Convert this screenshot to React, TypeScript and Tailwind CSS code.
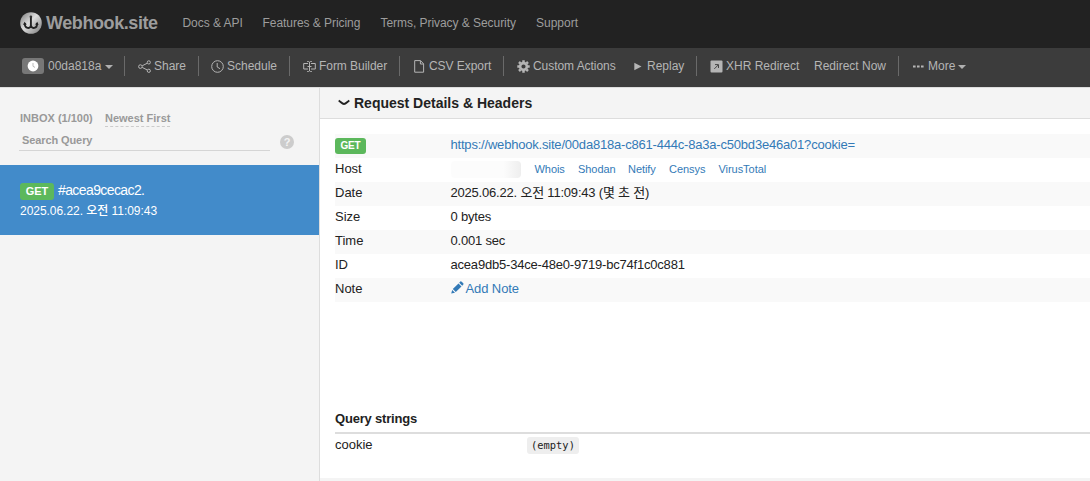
import type { ReactNode } from 'react';

function Anchor() {
  return (
    <svg className="size-[22px]" viewBox="0 0 22 22">
      <defs>
        <linearGradient id="metal" x1="0" y1="0" x2="1" y2="1">
          <stop offset="0" stopColor="#777" />
          <stop offset=".45" stopColor="#ddd" />
          <stop offset="1" stopColor="#777" />
        </linearGradient>
      </defs>
      <circle cx="11" cy="11" r="10.8" fill="url(#metal)" />
      <path d="M10.9 5V16M10.9 13.5C10.5 17.2 4.6 17 4.7 11.2M10.9 13.5C11.5 17.2 17.4 17 17.1 11.2" stroke="#222" strokeWidth="1.9" fill="none" />
      <path d="M4.5 9.8L3.2 13L6.8 12.4ZM17.3 9.8L18.6 13L15 12.4Z" fill="#222" />
      <circle cx="10.9" cy="4.8" r="1.3" fill="#333" />
    </svg>
  );
}

function Caret() {
  return <span className="ml-[4px] mt-[2px] border-x-4 border-t-4 border-x-transparent border-t-[#b0b0b0]" />;
}

function Item({ className, children }: { className: string; children: ReactNode }) {
  return <div className={`flex h-full shrink-0 items-center whitespace-nowrap ${className}`}>{children}</div>;
}

function Divider() {
  return <div className="mt-[8px] h-[20px] w-px shrink-0 self-start bg-[#6a6a6a]" />;
}

function Row({ label, striped, children }: { label: ReactNode; striped?: boolean; children: ReactNode }) {
  return (
    <div className={`flex h-[24px] leading-[21px] ${striped ? 'bg-[#f9f9f9]' : ''}`}>
      <div className="w-[115.5px] shrink-0">{label}</div>
      <div className="flex tracking-[-0.2px]">{children}</div>
    </div>
  );
}

export default function App() {
  return (
    <div className="flex h-[481px] w-[1090px] flex-col overflow-hidden bg-white font-['Liberation_Sans','Noto_Sans_CJK_KR',sans-serif] text-[13px] text-[#222]">
      <header className="flex h-[48px] shrink-0 items-center bg-[#222] pb-[3px] pl-[20px] text-[12px] text-[#9d9d9d]">
        <div className="flex w-[162.5px] items-center">
          <Anchor />
          <span className="ml-[4px] text-[18px] font-bold leading-[24px] tracking-[-0.42px]">Webhook.site</span>
        </div>
        <a className="w-[80px] tracking-[-0.05px]">Docs &amp; API</a>
        <a className="w-[118px] tracking-[-0.05px]">Features &amp; Pricing</a>
        <a className="w-[155.5px] tracking-[-0.05px]">Terms, Privacy &amp; Security</a>
        <a>Support</a>
      </header>

      <nav className="flex h-[39px] shrink-0 bg-[#3c3c3c] pl-[22px] text-[12px] text-[#b5b5b5] *:pb-[3px]">
        <Item className="w-[102px]">
          <span className="mr-[4px] flex h-[16px] w-[22px] items-center justify-center rounded-[3px] bg-[#777]">
            <svg className="size-[12px]" viewBox="0 0 12 12"><circle cx="6" cy="6" r="5.4" fill="#fff" /><path d="M6 3V6.3L8 7.4" stroke="#bbb" fill="none" /></svg>
          </span>
          <span>00da818a</span><Caret />
        </Item>
        <Divider />
        <Item className="w-[73px] pl-[13px]">
          <svg className="mr-[3px] size-[13px]" viewBox="0 0 13 13" fill="none" stroke="currentColor"><circle cx="2.4" cy="6.6" r="1.8" /><circle cx="10.8" cy="2.4" r="1.6" /><circle cx="10.8" cy="10.8" r="1.6" /><path d="M4.2 5.8L9.3 3.2M4.2 7.4L9.3 10" /></svg>
          <span>Share</span>
        </Item>
        <Divider />
        <Item className="w-[90px] pl-[12px]">
          <svg className="mr-[3px] size-[13px]" viewBox="0 0 13 13" fill="none" stroke="currentColor"><circle cx="6.5" cy="6.5" r="5.8" /><path d="M6.2 3V7L9 8.7" /></svg>
          <span>Schedule</span>
        </Item>
        <Divider />
        <Item className="w-[109px] pl-[13px]">
          <svg className="mr-[3px] size-[13px]" viewBox="0 0 13 13" fill="none" stroke="currentColor"><path d="M5 3.5H.7V9H5M8 3.5H12.3V9H8M4.2 1.5H5.5L6.5 2.2L7.5 1.5H8.8M6.5 2V11M4.2 11.5H5.5L6.5 10.8L7.5 11.5H8.8M4.5 6.5H8.5" /></svg>
          <span className="tracking-[-0.05px]">Form Builder</span>
        </Item>
        <Divider />
        <Item className="w-[103px] pl-[14px]">
          <svg className="mr-[4px] h-[13px] w-[11px]" viewBox="0 0 11 13" fill="none" stroke="currentColor"><path d="M.7 .6H6.5L9.6 3.8V12.2H.7ZM6.4 .8V4H9.5" /></svg>
          <span className="tracking-[-0.05px]">CSV Export</span>
        </Item>
        <Divider />
        <Item className="w-[130px] pl-[13px]">
          <svg className="mr-[3px] size-[13px]" viewBox="0 0 13 13" fill="none" stroke="currentColor"><circle cx="6.5" cy="6.5" r="3.4" strokeWidth="2.6" /><path d="M6.5 2V.3M6.5 11V12.7M2 6.5H.3M11 6.5H12.7M3.4 3.4L2 2M9.6 3.4L11 2M3.4 9.6L2 11M9.6 9.6L11 11" strokeWidth="2.5" /></svg>
          <span className="tracking-[-0.05px]">Custom Actions</span>
        </Item>
        <Item className="w-[62px] pl-[0px]">
          <svg className="mr-[4px] h-[9px] w-[9px]" viewBox="0 0 9 9" fill="currentColor"><path d="M.3 .8L7.5 4.5L.3 8.2Z" /></svg>
          <span>Replay</span>
        </Item>
        <Divider />
        <Item className="w-[117px] pl-[13px]">
          <svg className="mr-[3px] size-[13px]" viewBox="0 0 13 13"><rect x=".5" y=".5" width="12" height="12" rx="1" fill="#b5b5b5" /><path d="M4.3 8.9L8.2 5M5 4.6H8.5V8" stroke="#444" fill="none" /></svg>
          <span>XHR Redirect</span>
        </Item>
        <Item className="w-[84px]"><span>Redirect Now</span></Item>
        <Divider />
        <Item className="pl-[14px]">
          <svg className="mr-[4px] h-[3px] w-[11px]" viewBox="0 0 11 3" fill="currentColor"><rect y=".5" width="2.6" height="2" /><rect x="4" y=".5" width="2.6" height="2" /><rect x="8" y=".5" width="2.6" height="2" /></svg>
          <span>More</span><span className="-ml-px flex"><Caret /></span>
        </Item>
      </nav>

      <div className="flex min-h-0 grow">
        <aside className="w-[320px] shrink-0 border-r border-t border-[#ddd] bg-[#f4f4f4]">
          <div className="h-[77px] pl-[19px] pt-[23px] text-[11px] font-bold text-[#999]">
            <div className="flex h-[16px] pl-px leading-[15px]">
              <span className="w-[85px]">INBOX (1/100)</span>
              <span className="border-b border-dashed border-[#ccc]">Newest First</span>
            </div>
            <div className="flex">
              <div className="h-[24px] w-[251px] border-b border-[#d5d5d5] pl-[3px] pt-[6px] leading-[15px] tracking-[-0.1px]">Search Query</div>
              <div className="ml-[10px] mt-[8px] flex size-[14px] items-center justify-center rounded-full bg-[#ccc] text-[11px] text-[#f4f4f4]">?</div>
            </div>
          </div>
          <div className="h-[70px] bg-[#428bca] pl-[20px] pt-[17px] text-white">
            <div className="flex h-[21px]">
              <span className="mt-[1px] h-[17px] w-[34px] rounded-[3px] bg-[#5cb85c] text-center text-[11px] font-bold leading-[17px]">GET</span>
              <span className="ml-[4px] text-[14px] leading-[17px] tracking-[-0.6px]">#acea9cecac2.</span>
            </div>
            <div className="text-[12px] font-medium leading-[17px] tracking-[-0.04px]">2025.06.22. 오전 11:09:43</div>
          </div>
        </aside>

        <main className="flex grow flex-col">
          <div className="flex h-[32px] shrink-0 items-center border-y border-[#ddd] bg-[#f4f4f4] pl-[18px] text-[14px] font-bold">
            <svg className="mr-[4px] h-[8px] w-[12px]" viewBox="0 0 12 8"><path d="M.7 1.5C3 3.2 4.5 5 6 5C7.5 5 9 3.2 11.3 1.5" fill="none" stroke="#222" strokeWidth="2" /></svg>
            <span>Request Details &amp; Headers</span>
          </div>
          <div className="pl-[15px] pt-[15px]">
            <Row striped label={<span className="mt-[4px] block h-[16px] w-[31px] rounded-[3px] bg-[#5cb85c] text-center text-[10px] font-bold leading-[16px] tracking-[-0.2px] text-white">GET</span>}>
              <a className="text-[#337ab7]">https://webhook.site/00da818a-c861-444c-8a3a-c50bd3e46a01?cookie=</a>
            </Row>
            <Row label="Host">
              <span className="mt-[3px] h-[17px] w-[70px] rounded-[4px] bg-linear-to-r from-[#fcfcfc] from-75% to-[#eee]" />
              <div className="ml-[14px] flex text-[11px] leading-[23px] tracking-[-0.05px] text-[#337ab7]">
                <a className="w-[43.5px]">Whois</a>
                <a className="w-[50px]">Shodan</a>
                <a className="w-[41px]">Netify</a>
                <a className="w-[49.5px]">Censys</a>
                <a>VirusTotal</a>
              </div>
            </Row>
            <Row striped label="Date"><span>2025.06.22. 오전 11:09:43 (몇 초 전)</span></Row>
            <Row label="Size"><span>0 bytes</span></Row>
            <Row striped label="Time"><span>0.001 sec</span></Row>
            <Row label="ID"><span>acea9db5-34ce-48e0-9719-bc74f1c0c881</span></Row>
            <Row striped label="Note">
              <svg className="mr-[2px] mt-[3px] size-[13px]" viewBox="0 0 13 13" fill="#337ab7"><path d="M.2 12.6L1.2 8.9L4 11.7ZM1.8 8.1L7.5 2.4L10.5 5.4L4.8 11.1ZM8.2 1.7L9.3 .6Q10 .1 10.7 .7L12.3 2.3Q12.8 3 12.2 3.7L11.2 4.7Z" /></svg>
              <a className="tracking-[-0.1px] text-[#337ab7]">Add Note</a>
            </Row>
          </div>
          <div className="ml-[15px] mt-[107px] h-[25px] shrink-0 border-b-2 border-[#ddd] font-bold leading-[20px] tracking-[-0.2px]">Query strings</div>
          <div className="ml-[15px] flex h-[44px] shrink-0 leading-[22px]">
            <span className="w-[192px]">cookie</span>
            <code className="mt-[3px] h-[17px] w-[52px] rounded-[3px] bg-[#eee] text-center font-['DejaVu_Sans_Mono',monospace] text-[10.4px] leading-[17px]">(empty)</code>
          </div>
          <div className="h-[3px] shrink-0 bg-[#f4f4f4]" />
        </main>
      </div>
    </div>
  );
}
